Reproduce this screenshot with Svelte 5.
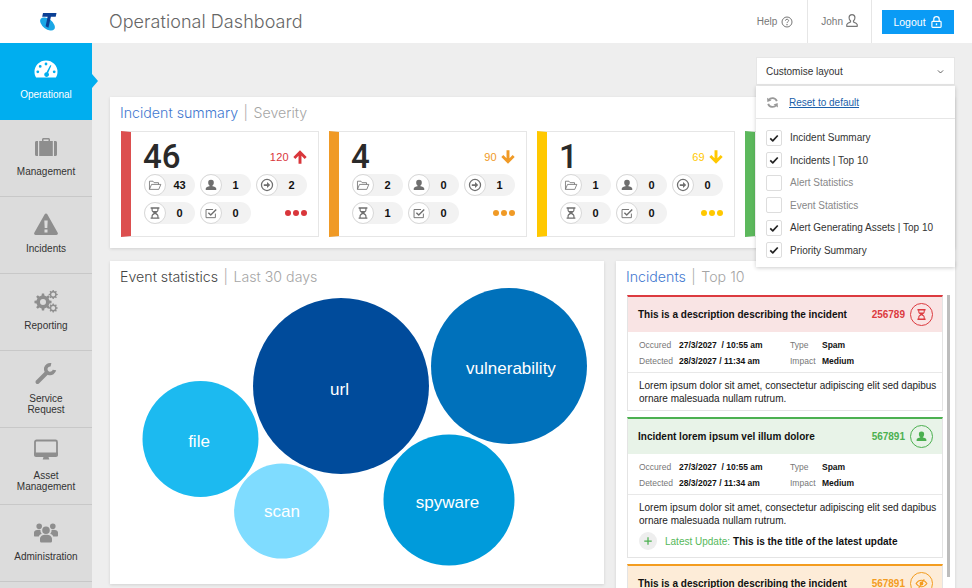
<script>
	const navItems = [
		{ id: 'gauge', label: ['Operational'], active: true },
		{ id: 'briefcase', label: ['Management'] },
		{ id: 'warning', label: ['Incidents'] },
		{ id: 'gears', label: ['Reporting'] },
		{ id: 'wrench', label: ['Service', 'Request'] },
		{ id: 'monitor', label: ['Asset', 'Management'] },
		{ id: 'users', label: ['Administration'] }
	];

	// the fourth card sits under the customise menu, only its bar shows
	const severities = [
		{ total: 46, trend: 120, dir: 'up', color: '#dc4f4f', trendColor: '#d9363b', counts: [43, 1, 2, 0, 0] },
		{ total: 4, trend: 90, dir: 'down', color: '#f09a26', trendColor: '#f09a26', counts: [2, 0, 1, 1, 0] },
		{ total: 1, trend: 69, dir: 'down', color: '#ffc800', trendColor: '#ffc800', counts: [1, 0, 0, 0, 0] },
		{ color: '#5cb85c', trendColor: '#5cb85c' }
	];
	const pillIcons = ['folder', 'person', 'arrow', 'hourglass', 'checksquare'];

	const layoutOptions = [
		{ label: 'Incident Summary', on: true },
		{ label: 'Incidents | Top 10', on: true },
		{ label: 'Alert Statistics', on: false },
		{ label: 'Event Statistics', on: false },
		{ label: 'Alert Generating Assets | Top 10', on: true },
		{ label: 'Priority Summary', on: true }
	];

	const bubbles = [
		{ label: 'url', x: 231, y: 99, r: 88, fill: '#004b9b', lx: 229.5, ly: 108 },
		{ label: 'vulnerability', x: 399, y: 79, r: 78, fill: '#0071bb', lx: 401, ly: 87 },
		{ label: 'file', x: 90.5, y: 152, r: 58, fill: '#1cbaf0', lx: 89, ly: 160 },
		{ label: 'scan', x: 171.7, y: 224, r: 47.6, fill: '#7fdcff', lx: 172, ly: 230 },
		{ label: 'spyware', x: 339, y: 213, r: 65.5, fill: '#009bdb', lx: 337.5, ly: 221 }
	];

	const lorem = 'Lorem ipsum dolor sit amet, consectetur adipiscing elit sed dapibus ornare malesuada nullam rutrum.';
	const incidents = [
		{ title: 'This is a description describing the incident', num: '256789', color: '#dc3a3f', tint: '#f9e4e4', icon: 'hourglass' },
		{ title: 'Incident lorem ipsum vel illum dolore', num: '567891', color: '#4cb050', tint: '#e8f3e8', icon: 'person', update: 'This is the title of the latest update' },
		{ title: 'This is a description describing the incident', num: '567891', color: '#f39c1f', tint: '#fdecd8', icon: 'eyeslash' }
	];

	function gear(cx, cy, ro, ri, hole, n) {
		let d = '';
		const step = (Math.PI * 2) / n;
		for (let i = 0; i < n; i++) {
			const a = i * step;
			const pts = [
				[ri, a - step * 0.5],
				[ri, a - step * 0.27],
				[ro, a - step * 0.17],
				[ro, a + step * 0.17],
				[ri, a + step * 0.27]
			];
			for (const [r, t] of pts) {
				d += (d ? 'L' : 'M') + (cx + r * Math.cos(t)).toFixed(2) + ' ' + (cy + r * Math.sin(t)).toFixed(2);
			}
		}
		d += `zM${cx - hole} ${cy}a${hole} ${hole} 0 1 0 ${hole * 2} 0a${hole} ${hole} 0 1 0 ${-hole * 2} 0z`;
		return d;
	}
</script>

{#snippet icon(name)}
	<svg class="icon" viewBox="0 0 24 24" aria-hidden="true">
		{#if name === 'gauge'}
			<path fill-rule="evenodd" d="M12 2.5A11.5 11.5 0 0 0 .5 14c0 2.2.6 4 1.6 5.5h19.8c1-1.5 1.6-3.3 1.6-5.5A11.5 11.5 0 0 0 12 2.5zM12 4.6a1.4 1.4 0 1 1 0 2.8 1.4 1.4 0 0 1 0-2.8zM6.2 7a1.4 1.4 0 1 1 0 2.8 1.4 1.4 0 0 1 0-2.8zM3.8 12.4a1.4 1.4 0 1 1 0 2.8 1.4 1.4 0 0 1 0-2.8zM20.2 12.4a1.4 1.4 0 1 1 0 2.8 1.4 1.4 0 0 1 0-2.8zM16.2 7.2l1.2.4-3.2 7.2a2.4 2.4 0 1 1-1.7-.6z" />
		{:else if name === 'briefcase'}
			<path fill-rule="evenodd" d="M8 6V4.5C8 3.7 8.7 3 9.5 3h5c.8 0 1.5.7 1.5 1.5V6h-1.5V4.5h-5V6zM2.5 6H4v15H2.5C1.6 21 1 20.4 1 19.500v-12C1 6.600 1.600 6 2.500 6zM5.200 6h13.600v15H5.200zM20 6h1.500c.9 0 1.500.6 1.500 1.500v12c0 .9-.6 1.500-1.500 1.500H20z" />
		{:else if name === 'warning'}
			<path fill-rule="evenodd" d="M12 1.500c.6 0 1 .3 1.300.8l10.400 18.500c.5 1-.1 2.200-1.300 2.200H1.600C.4 23-.2 21.800.3 20.800L10.700 2.300c.3-.5.700-.8 1.300-.8zM10.300 8.500l.4 7.500h2.600l.4-7.500zM10.500 17.500v3h3v-3z" />
		{:else if name === 'gears'}
			<path fill-rule="evenodd" d={gear(9, 13, 8.6, 6.6, 3, 8)} />
			<path fill-rule="evenodd" d={gear(19.2, 5.5, 4.6, 3.5, 2, 8)} />
			<path fill-rule="evenodd" d={gear(19.2, 19, 4.6, 3.5, 2, 8)} />
		{:else if name === 'wrench'}
			<path class="line" style="stroke-width:3.6" d="M17 3.800A4.400 4.400 0 1 0 20.400 9" />
			<path class="line" style="stroke-width:4;stroke-linecap:round" d="M12.500 12L3.500 21" />
		{:else if name === 'monitor'}
			<rect class="line" style="stroke-width:1.800" x="1" y="2.500" width="22" height="14.500" rx="1.500" />
			<path d="M0 14.500h24v2.500c0 1-.8 2-2 2H2c-1.200 0-2-1-2-2zM9.500 19h5l.8 2.500H8.700z" />
		{:else if name === 'users'}
			<path d="M5.200 3.500a2.800 2.800 0 1 1 0 5.600 2.800 2.800 0 0 1 0-5.600zM18.800 3.500a2.800 2.800 0 1 1 0 5.600 2.800 2.800 0 0 1 0-5.600zM12 6.500a3.800 3.800 0 1 1 0 7.600 3.800 3.800 0 0 1 0-7.600zM0 12.500c0-1.500 1.500-2.700 5.200-2.700.8 0 1 .2 1.300.4-.2 1.300.3 2.500 1.300 3.500-1.500.5-2.500 1.300-3 2.800H1c-.6 0-1-.4-1-1zM24 12.500c0-1.500-1.500-2.700-5.200-2.700-.8 0-1 .2-1.300.4.200 1.300-.3 2.500-1.300 3.500 1.500.5 2.500 1.300 3 2.800h3.800c.6 0 1-.4 1-1zM6 19c0-2.800 2.500-4.300 6-4.300s6 1.500 6 4.300v2c0 1-.8 1.500-1.500 1.500h-9C6.800 22.500 6 22 6 21z" />
		{:else if name === 'help'}
			<circle class="line" cx="12" cy="12" r="10" />
			<path class="line" d="M8.800 9.300c.2-1.800 1.500-2.800 3.200-2.800 1.800 0 3.200 1.100 3.200 2.700 0 2.500-3.200 2.400-3.200 5" />
			<path d="M10.800 16h2.400v2.400h-2.400z" />
		{:else if name === 'user'}
			<path class="line" d="M12 2c3 0 5 2.300 5 5.300 0 2.300-1 4.200-2.500 5.200v2c2.500 1 6 2.200 6.500 4.500v3H3v-3c.5-2.300 4-3.500 6.500-4.500v-2C8 11.500 7 9.600 7 7.300 7 4.300 9 2 12 2z" />
		{:else if name === 'lock'}
			<path class="line" style="stroke-width:2.200" d="M7 11V7a5 5 0 0 1 10 0v4" />
			<rect class="line" style="stroke-width:2.200" x="3.500" y="11" width="17" height="11" rx="1.500" />
			<path class="line" style="stroke-width:2.600" d="M12 14.500v3.500" />
		{:else if name === 'chevron'}
			<path class="line" d="M5 9l7 7 7-7" />
		{:else if name === 'refresh'}
			<path class="line" style="stroke-width:3.400" d="M20 9.500A8.500 8.500 0 0 0 5 7.500M4 14.500a8.500 8.500 0 0 0 15 2" />
			<path d="M2 3l.5 8 7.500-2.500zM22 21l-.5-8-7.500 2.500z" />
		{:else if name === 'check'}
			<path class="line" style="stroke-width:4" d="M3 13l6 6L21 6" />
		{:else if name === 'folder'}
			<path class="line" style="stroke-width:1.400" d="M2.500 19.500V5.500h6l2 2.500h7.500v3M2.500 19.500l3.500-8.500h16l-3.500 8.500z" />
		{:else if name === 'person'}
			<path d="M12 3a4.800 4.800 0 0 1 4.800 5.200c0 2.200-1 3.800-2.300 4.800v1c2.800.7 6.500 1.500 6.500 4v2.500H3V18c0-2.500 3.700-3.300 6.500-4v-1C8.200 12 7.200 10.400 7.200 8.200A4.800 4.800 0 0 1 12 3z" />
		{:else if name === 'arrow'}
			<circle class="line" style="stroke-width:2.200" cx="12" cy="12" r="9.500" />
			<path d="M6.500 10.500h5.500V7l5.500 5-5.500 5v-3.500H6.500z" />
		{:else if name === 'hourglass'}
			<path d="M4.500 2h15v2.500H18V7c0 2.500-2.200 4-4 5 1.800 1 4 2.500 4 5v2.500h1.500V22h-15v-2.500H6V17c0-2.500 2.200-4 4-5-1.800-1-4-2.500-4-5V4.500H4.500zM8 4.500V7c0 .6.200 1 .5 1.500h7c.3-.5.500-.9.500-1.500V4.500zM12 13.500c-1.800 1-4 2-4 3.500v2.500h8V17c0-1.500-2.200-2.500-4-3.500z" fill-rule="evenodd" />
		{:else if name === 'checksquare'}
			<path class="line" style="stroke-width:1.600" d="M19.500 13v7h-16V6h12" />
			<path class="line" style="stroke-width:2.400" d="M7.500 11.500l4 4L21 6" />
		{:else if name === 'eyeslash'}
			<path class="line" d="M2 12s4-6 10-6 10 6 10 6-4 6-10 6-10-6-10-6z" />
			<path d="M12 8.500a3.500 3.500 0 1 1 0 7 3.500 3.500 0 0 1 0-7z" />
			<path class="line" d="M17 4L7 20" />
		{:else if name === 'up'}
			<path d="M12 2l10 10-3 3-4.800-4.800V22H9.800V10.200L5 15l-3-3z" />
		{:else if name === 'down'}
			<path d="M12 22L2 12l3-3 4.800 4.800V2h4.400v11.800L19 9l3 3z" />
		{:else if name === 'plus'}
			<path class="line" style="stroke-width:3" d="M12 3v18M3 12h18" />
		{/if}
	</svg>
{/snippet}

<div class="page">
	<header class="topbar">
		<div class="logo">
			<svg viewBox="0 0 18 20" width="18" height="20" aria-hidden="true">
				<ellipse cx="8.500" cy="12" rx="8.500" ry="5" transform="rotate(38 8.500 12)" fill="#1aa7e6" />
				<path d="M4 1h13.500l-.8 3.800h-4.800l-2.500 11-2.800-1.600 2-9.400H3.200z" fill="#0b3f94" />
			</svg>
		</div>
		<h1 class="title">Operational Dashboard</h1>
		<div class="top-actions">
			<div class="top-link help">Help <span class="ico-help">{@render icon('help')}</span></div>
			<div class="top-link john">John <span class="ico-user">{@render icon('user')}</span></div>
			<button class="logout">Logout <span class="ico-lock">{@render icon('lock')}</span></button>
		</div>
	</header>

	<div class="body">
		<nav class="sidebar">
			{#each navItems as item}
				<a class="nav-item" class:active={item.active} class:two={item.label.length > 1} href="#top">
					<span class="nav-icon">{@render icon(item.id)}</span>
					<span class="nav-label">
						{#each item.label as line}
							<span>{line}</span>
						{/each}
					</span>
				</a>
			{/each}
		</nav>

		<main class="content">
			<section class="panel summary">
				<h2 class="heading"><span class="blue">Incident summary</span><i>|</i><span class="sub">Severity</span></h2>
				<div class="cards">
					{#each severities as s}
						<article class="sev-card" style="--c:{s.color};--t:{s.trendColor}">
							{#if s.total}
								<div class="sev-top">
									<span class="sev-total">{s.total}</span>
									<span class="sev-trend">{s.trend}<span class="trend-ico">{@render icon(s.dir)}</span></span>
								</div>
								<div class="pills">
									{#each s.counts as n, i}
										<div class="pill">
											<span class="pill-ico">{@render icon(pillIcons[i])}</span>
											<b>{n}</b>
										</div>
									{/each}
									<div class="dots"><span></span><span></span><span></span></div>
								</div>
							{/if}
						</article>
					{/each}
				</div>
			</section>

			<div class="lower">
				<section class="panel events">
					<h2 class="heading"><span class="dark">Event statistics</span><i>|</i><span class="sub">Last 30 days</span></h2>
					<svg class="bubbles" viewBox="0 0 494 297" width="494" height="297">
						{#each bubbles as b}
							<circle cx={b.x} cy={b.y} r={b.r} fill={b.fill} />
							<text x={b.lx} y={b.ly} text-anchor="middle">{b.label}</text>
						{/each}
					</svg>
				</section>

				<section class="panel incidents">
					<h2 class="heading"><span class="blue">Incidents</span><i>|</i><span class="sub">Top 10</span></h2>
					<div class="inc-list">
						{#each incidents as inc}
							<article class="inc" style="--c:{inc.color};--tint:{inc.tint}">
								<div class="inc-head">
									<strong>{inc.title}</strong>
									<span class="inc-num">{inc.num}</span>
									<span class="inc-ico">{@render icon(inc.icon)}</span>
								</div>
								<div class="inc-meta">
									<span>Occured</span><b>27/3/2027 &nbsp;/ 10:55 am</b><span>Type</span><b>Spam</b>
									<span>Detected</span><b>28/3/2027 / 11:34 am</b><span>Impact</span><b>Medium</b>
								</div>
								<div class="inc-text">
									<p>{lorem}</p>
									{#if inc.update}
										<div class="inc-update">
											<span class="plus">{@render icon('plus')}</span>
											<span class="green">Latest Update:</span>
											<b>{inc.update}</b>
										</div>
									{/if}
								</div>
							</article>
						{/each}
						<div class="scrollbar"></div>
					</div>
				</section>
			</div>

			<aside class="customise">
				<div class="cust-head">
					<span>Customise layout</span>
					<span class="chev">{@render icon('chevron')}</span>
				</div>
				<div class="cust-menu">
					<div class="reset">
						<span class="ref">{@render icon('refresh')}</span>
						<a href="#top">Reset to default</a>
					</div>
					<ul>
						{#each layoutOptions as opt}
							<li class:off={!opt.on}>
								<span class="box">{#if opt.on}{@render icon('check')}{/if}</span>
								{opt.label}
							</li>
						{/each}
					</ul>
				</div>
			</aside>
		</main>
	</div>
</div>

<style>
	:global(body) {
		margin: 0;
		background: #eee;
	}

	.page {
		width: 972px;
		height: 588px;
		overflow: hidden;
		display: flex;
		flex-direction: column;
		font-family: 'Liberation Sans', Arial, sans-serif;
		color: #222;
	}

	.icon {
		display: block;
		width: 100%;
		height: 100%;
		fill: currentColor;
	}

	.icon .line {
		fill: none;
		stroke: currentColor;
		stroke-width: 2;
		stroke-linejoin: round;
	}

	/* Header */
	.topbar {
		height: 43px;
		flex: none;
		background: #fff;
		display: flex;
		align-items: center;
	}

	.logo {
		width: 39px;
		padding-left: 39px;
		height: 20px;
		margin-right: 31px;
	}

	.title {
		margin: 0;
		font: 300 18px Inter, sans-serif;
		color: #666;
		letter-spacing: 0.05px;
	}

	.top-actions {
		margin-left: auto;
		display: flex;
		align-items: center;
		height: 100%;
		padding-right: 18px;
	}

	.top-link {
		height: 100%;
		display: flex;
		align-items: center;
		font-size: 10px;
		color: #777;
		box-sizing: border-box;
	}

	.help {
		padding-right: 14px;
		border-right: 1px solid #e6e6e6;
	}

	.john {
		padding: 0 12px 0 13px;
		border-right: 1px solid #e6e6e6;
	}

	.ico-help {
		width: 12px;
		height: 12px;
		margin-left: 4px;
	}

	.ico-user {
		width: 14px;
		height: 15px;
		margin-left: 2px;
		margin-top: -3px;
	}

	.logout {
		margin-left: 10px;
		width: 72px;
		height: 24px;
		border: 0;
		padding: 0;
		background: #0a9bf5;
		color: #fff;
		font: 10.5px 'Liberation Sans', Arial, sans-serif;
		display: flex;
		align-items: center;
		justify-content: center;
		gap: 4px;
	}

	.ico-lock {
		width: 13px;
		height: 14px;
	}

	/* Sidebar */
	.body {
		flex: 1;
		display: flex;
		min-height: 0;
	}

	.sidebar {
		width: 92px;
		flex: none;
		background: #dcdcdc;
	}

	.nav-item {
		position: relative;
		height: 77px;
		box-sizing: border-box;
		padding-bottom: 4px;
		border-bottom: 1px solid #c8c8c8;
		display: flex;
		flex-direction: column;
		align-items: center;
		justify-content: center;
		text-decoration: none;
		color: #333;
		font-size: 10px;
	}

	.nav-item.two {
		padding-top: 2px;
	}

	.nav-item.active {
		background: #00aeef;
		color: #fff;
		border-bottom-color: #00aeef;
	}

	.nav-item.active::after {
		content: '';
		position: absolute;
		left: 92px;
		top: 31px;
		border: 7px solid transparent;
		border-left: 6px solid #00aeef;
		border-right: 0;
	}

	.nav-icon {
		height: 24px;
		width: 24px;
		color: #8e8e8e;
		margin-bottom: 6.5px;
	}

	.two .nav-icon {
		margin-bottom: 8.5px;
	}

	.active .nav-icon {
		color: #fff;
	}

	.nav-label {
		display: flex;
		flex-direction: column;
		align-items: center;
		line-height: 11px;
	}

	/* Content */
	.content {
		position: relative;
		flex: 1;
		min-width: 0;
		box-sizing: border-box;
		padding: 54px 17px 0 18px;
	}

	.panel {
		background: #fff;
		box-shadow: 0 1px 3px rgba(0, 0, 0, 0.12);
	}

	.heading {
		margin: 0;
		padding: 7px 10px 0;
		height: 18px;
		font: 300 14.2px/18px Inter, sans-serif;
		white-space: nowrap;
	}

	.heading i {
		font-style: normal;
		color: #aaa;
		margin: 0 5.5px;
	}

	.blue {
		color: #3f78d0;
	}

	.dark {
		color: #444;
	}

	.sub {
		color: #a5a5a5;
	}

	.summary {
		height: 151px;
		box-sizing: border-box;
		overflow: hidden;
	}

	.cards {
		display: flex;
		gap: 10px;
		margin: 9px 0 0 11px;
	}

	.sev-card {
		width: 198px;
		height: 106px;
		flex: none;
		box-sizing: border-box;
		border: 1px solid #e6e6e6;
		border-left: 10px solid var(--c);
		padding: 7px 11px 0 13px;
	}

	.sev-top {
		display: flex;
		justify-content: space-between;
		align-items: center;
		height: 35px;
	}

	.sev-total {
		font: 500 33px/35px Roboto, sans-serif;
		color: #2a2a2a;
		margin-left: -1px;
	}

	.sev-trend {
		display: flex;
		align-items: center;
		gap: 3px;
		font-size: 11px;
		letter-spacing: 0.3px;
		color: var(--t);
		margin-right: -1px;
	}

	.trend-ico {
		width: 16px;
		height: 16px;
	}

	.pills {
		display: grid;
		grid-template-columns: 51px 51px 51px;
		gap: 6px 5px;
	}

	.pill {
		height: 22px;
		border-radius: 11px;
		background: #f2f2f2;
		display: flex;
		align-items: center;
		padding-right: 2px;
	}

	.pill b {
		flex: 1;
		text-align: center;
		font-size: 11px;
		color: #111;
	}

	.pill-ico {
		width: 14px;
		height: 14px;
		padding: 3px;
		background: #fff;
		border: 1px solid #d8d8d8;
		border-radius: 50%;
		color: #6f6f6f;
		flex: none;
	}

	.dots {
		display: flex;
		align-items: center;
		justify-content: flex-end;
		gap: 2px;
	}

	.dots span {
		width: 6px;
		height: 6px;
		border-radius: 50%;
		background: var(--t);
	}

	.lower {
		display: flex;
		gap: 12px;
		margin-top: 13px;
		align-items: flex-start;
	}

	.events {
		width: 494px;
		height: 323px;
		flex: none;
	}

	.bubbles {
		display: block;
		margin-top: 1px;
	}

	.bubbles text {
		fill: #fff;
		font: 17px 'Liberation Sans', Arial, sans-serif;
	}

	.incidents {
		flex: 1;
		height: 340px;
		overflow: hidden;
	}

	.inc-list {
		position: relative;
		padding: 9px 12px 0 11px;
	}

	.scrollbar {
		position: absolute;
		right: 5px;
		top: 9px;
		width: 3px;
		height: 282px;
		background: #bdbdbd;
	}

	.inc {
		box-sizing: border-box;
		background: #fff;
		border: 1px solid #e4e4e4;
		border-top: 2px solid var(--c);
		margin-bottom: 6px;
	}

	.inc-head {
		height: 35px;
		background: var(--tint);
		display: flex;
		align-items: center;
		padding: 0 9px 0 10px;
		font-size: 10px;
	}

	.inc-head strong {
		flex: 1;
		color: #111;
	}

	.inc-num {
		font-weight: 700;
		color: var(--c);
	}

	.inc-ico {
		width: 13px;
		height: 13px;
		padding: 4px;
		margin-left: 5px;
		border: 1px solid var(--c);
		border-radius: 50%;
		color: var(--c);
	}

	.inc-meta {
		display: grid;
		grid-template-columns: 40px 111px 32px 1fr;
		align-items: center;
		row-gap: 4px;
		padding: 7px 11px 5px 11px;
		height: 28px;
		border-bottom: 1px solid #e8e8e8;
		font-size: 8.5px;
		line-height: 12px;
		color: #777;
	}

	.inc-meta b {
		color: #111;
	}

	.inc-text {
		padding: 6px 3px 5px 11px;
		font-size: 10px;
		line-height: 13px;
		color: #222;
	}

	.inc-text p {
		margin: 0;
	}

	.inc-update {
		display: flex;
		align-items: center;
		margin: 5px 0 2px;
		gap: 3px;
	}

	.inc-update b {
		color: #111;
	}

	.plus {
		width: 10px;
		height: 10px;
		padding: 4px;
		border-radius: 50%;
		background: #eee;
		color: #4cb050;
		margin-right: 5px;
	}

	.green {
		color: #55b85a;
	}

	/* Customise dropdown */
	.customise {
		position: absolute;
		top: 14px;
		right: 17px;
		width: 199px;
		font-size: 10px;
		color: #333;
	}

	.cust-head {
		height: 28px;
		box-sizing: border-box;
		background: #fff;
		border: 1px solid #e6e6e6;
		display: flex;
		align-items: center;
		justify-content: space-between;
		padding: 0 9px;
		margin-bottom: 1px;
	}

	.chev {
		width: 9px;
		height: 9px;
	}

	.cust-menu {
		height: 181px;
		box-sizing: border-box;
		background: #fff;
		box-shadow: 0 1px 4px rgba(0, 0, 0, 0.2);
	}

	.reset {
		height: 33px;
		box-sizing: border-box;
		display: flex;
		align-items: center;
		gap: 10px;
		padding-left: 10px;
		border-bottom: 1px solid #e6e6e6;
	}

	.reset a {
		color: #1b5faa;
	}

	.ref {
		width: 13px;
		height: 13px;
		color: #999;
	}

	ul {
		list-style: none;
		margin: 0;
		padding: 7.5px 0 0 10px;
	}

	li {
		height: 22.5px;
		display: flex;
		align-items: center;
		gap: 8px;
	}

	li.off {
		color: #888;
	}

	.box {
		width: 14px;
		height: 14px;
		border: 1px solid #ddd;
		border-radius: 2px;
		display: block;
		color: #222;
	}

	.box :global(svg) {
		width: 10px;
		height: 10px;
		margin: 2px;
	}
</style>
